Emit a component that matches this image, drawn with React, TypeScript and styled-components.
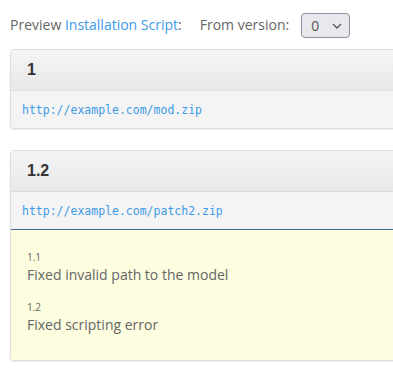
import styled, { createGlobalStyle } from "styled-components";

type ChangeType = {
  version: string;
  text: string;
};

type ReleaseType = {
  version: string;
  url: string;
  changes?: ChangeType[];
};

const releases: ReleaseType[] = [
  { version: "1", url: "http://example.com/mod.zip" },
  {
    version: "1.2",
    url: "http://example.com/patch2.zip",
    changes: [
      { version: "1.1", text: "Fixed invalid path to the model" },
      { version: "1.2", text: "Fixed scripting error" },
    ],
  },
];

const GlobalStyle = createGlobalStyle`
  body {
    margin: 0;
    background: #fff;
    font-family: "Open Sans", "Liberation Sans", sans-serif;
    overflow: hidden;
  }
`;

const Page = styled.div`
  padding: 0 0 0 10px;
  width: 420px;
`;

const Toolbar = styled.div`
  display: flex;
  align-items: center;
  height: 49px;
  font-size: 14px;
  color: #666;
`;

const Link = styled.a`
  color: #3d9ae8;
  text-decoration: none;
`;

const Label = styled.span`
  margin-left: 18px;
  margin-right: 12px;
`;

const Select = styled.div`
  display: flex;
  align-items: center;
  justify-content: space-between;
  box-sizing: border-box;
  width: 49px;
  height: 25px;
  padding: 0 7px 0 9px;
  margin-top: 2px;
  border: 1px solid #8f8f9d;
  border-radius: 4px;
  background: #e9e9ed;
  color: #555;
  font-size: 14px;
`;

const Panel = styled.div`
  border: 1px solid #ddd;
  border-radius: 4px;
  background: #f4f4f4;
  box-shadow: 0 1px 2px rgba(0, 0, 0, 0.08);
  margin-bottom: 21px;
  overflow: hidden;
`;

const PanelHeading = styled.div`
  height: 40px;
  display: flex;
  align-items: center;
  padding: 0 16px;
  background: linear-gradient(to bottom, #f5f5f5 0, #e8e8e8 100%);
  border-bottom: 1px solid #ddd;
  font-family: "Liberation Sans", Arial, sans-serif;
  font-weight: bold;
  font-size: 16px;
  color: #333;
`;

const PanelBody = styled.div<{ $divider: boolean }>`
  height: 37px;
  display: flex;
  align-items: center;
  padding: 0 11px;
  border-bottom: ${({ $divider }) => ($divider ? "1px solid #3e6a92" : "0")};
`;

const Url = styled.a`
  font-family: "DejaVu Sans Mono", "Liberation Mono", monospace;
  font-size: 11.5px;
  color: #3d9ae8;
  text-decoration: none;
`;

const Changes = styled.div`
  background: #fdfde0;
  padding: 20px 16px 24px;
  display: flex;
  flex-direction: column;
  gap: 14px;
`;

const Change = styled.div`
  display: flex;
  flex-direction: column;
`;

const ChangeVersion = styled.div`
  font-size: 10px;
  color: #666;
  line-height: 14px;
`;

const ChangeText = styled.div`
  font-size: 14px;
  color: #666;
  line-height: 22px;
`;

export default function App() {
  return (
    <>
      <GlobalStyle />
      <Page>
        <Toolbar>
          Preview&nbsp;<Link href="#">Installation Script</Link>:
          <Label>From version:</Label>
          <Select>
            <span>0</span>
            <svg width="10" height="6" viewBox="0 0 10 6">
              <path d="M1 1l4 4 4-4" fill="none" stroke="#555" strokeWidth="1.3" />
            </svg>
          </Select>
        </Toolbar>
        {releases.map((release) => (
          <Panel key={release.version}>
            <PanelHeading>{release.version}</PanelHeading>
            <PanelBody $divider={!!release.changes}>
              <Url href="#">{release.url}</Url>
            </PanelBody>
            {release.changes && (
              <Changes>
                {release.changes.map((change) => (
                  <Change key={change.version}>
                    <ChangeVersion>{change.version}</ChangeVersion>
                    <ChangeText>{change.text}</ChangeText>
                  </Change>
                ))}
              </Changes>
            )}
          </Panel>
        ))}
      </Page>
    </>
  );
}
